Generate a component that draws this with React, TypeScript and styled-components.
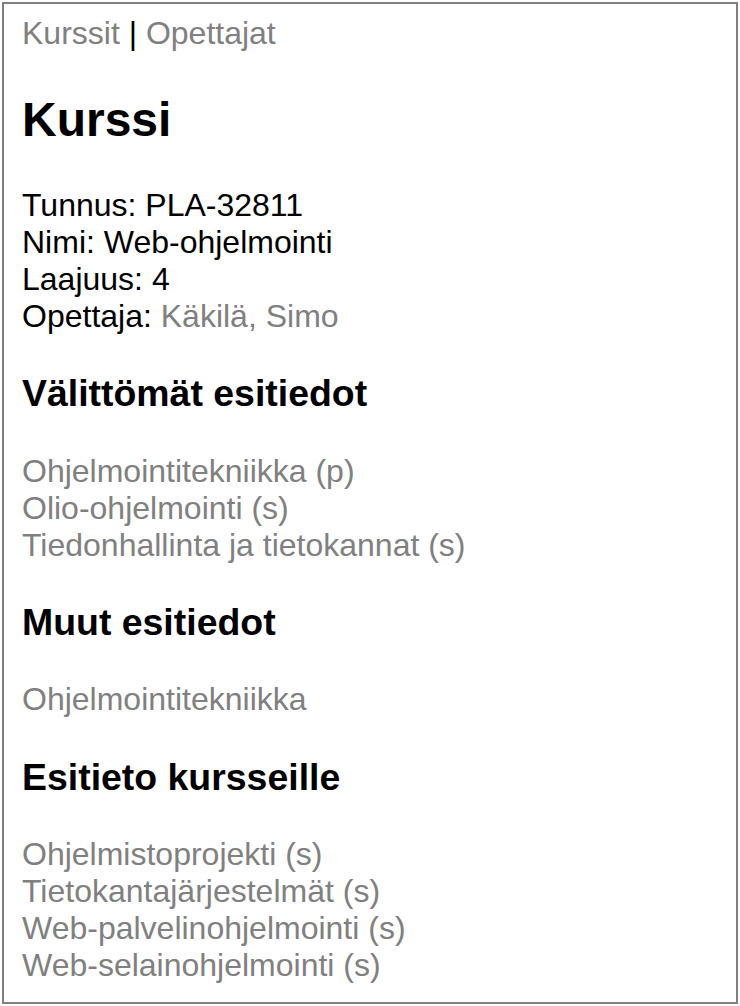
import React from "react";
import styled, { createGlobalStyle } from "styled-components";

const GlobalStyle = createGlobalStyle`
  html, body {
    margin: 0;
    padding: 0;
    background: #ffffff;
  }
  body {
    font-family: "Liberation Sans", Arial, Helvetica, sans-serif;
    font-size: 32px;
    color: #000000;
  }
`;

const Frame = styled.div`
  box-sizing: border-box;
  margin: 2px;
  height: calc(100vh - 4px);
  border: 2px solid #808080;
  padding: 11px 18px 0 18px;
  overflow: hidden;
`;

const Nav = styled.div`
  line-height: normal;
`;

const Link = styled.a`
  color: #808080;
  text-decoration: none;
`;

const Title = styled.h2`
  font-size: 48px;
  font-weight: bold;
  margin: 0.83em 0;
`;

const Section = styled.h3`
  font-size: 37.44px;
  font-weight: bold;
  margin: 1em 0;
`;

const Info = styled.p`
  margin: 32px 0;
`;

const LinkList = styled.div`
  display: flex;
  flex-direction: column;
  align-items: flex-start;
`;

const courses = {
  direct: ["Ohjelmointitekniikka (p)", "Olio-ohjelmointi (s)", "Tiedonhallinta ja tietokannat (s)"],
  other: ["Ohjelmointitekniikka"],
  next: [
    "Ohjelmistoprojekti (s)",
    "Tietokantajärjestelmät (s)",
    "Web-palvelinohjelmointi (s)",
    "Web-selainohjelmointi (s)",
  ],
};

const List = ({ items }: { items: string[] }) => (
  <LinkList>
    {items.map((t) => (
      <Link key={t} href="#">
        {t}
      </Link>
    ))}
  </LinkList>
);

export default function App() {
  return (
    <>
      <GlobalStyle />
      <Frame>
        <Nav>
          <Link href="#">Kurssit</Link> | <Link href="#">Opettajat</Link>
        </Nav>
        <Title>Kurssi</Title>
        <Info>
          Tunnus: PLA-32811
          <br />
          Nimi: Web-ohjelmointi
          <br />
          Laajuus: 4
          <br />
          Opettaja: <Link href="#">Käkilä, Simo</Link>
        </Info>
        <Section>Välittömät esitiedot</Section>
        <List items={courses.direct} />
        <Section>Muut esitiedot</Section>
        <List items={courses.other} />
        <Section>Esitieto kursseille</Section>
        <List items={courses.next} />
      </Frame>
    </>
  );
}
